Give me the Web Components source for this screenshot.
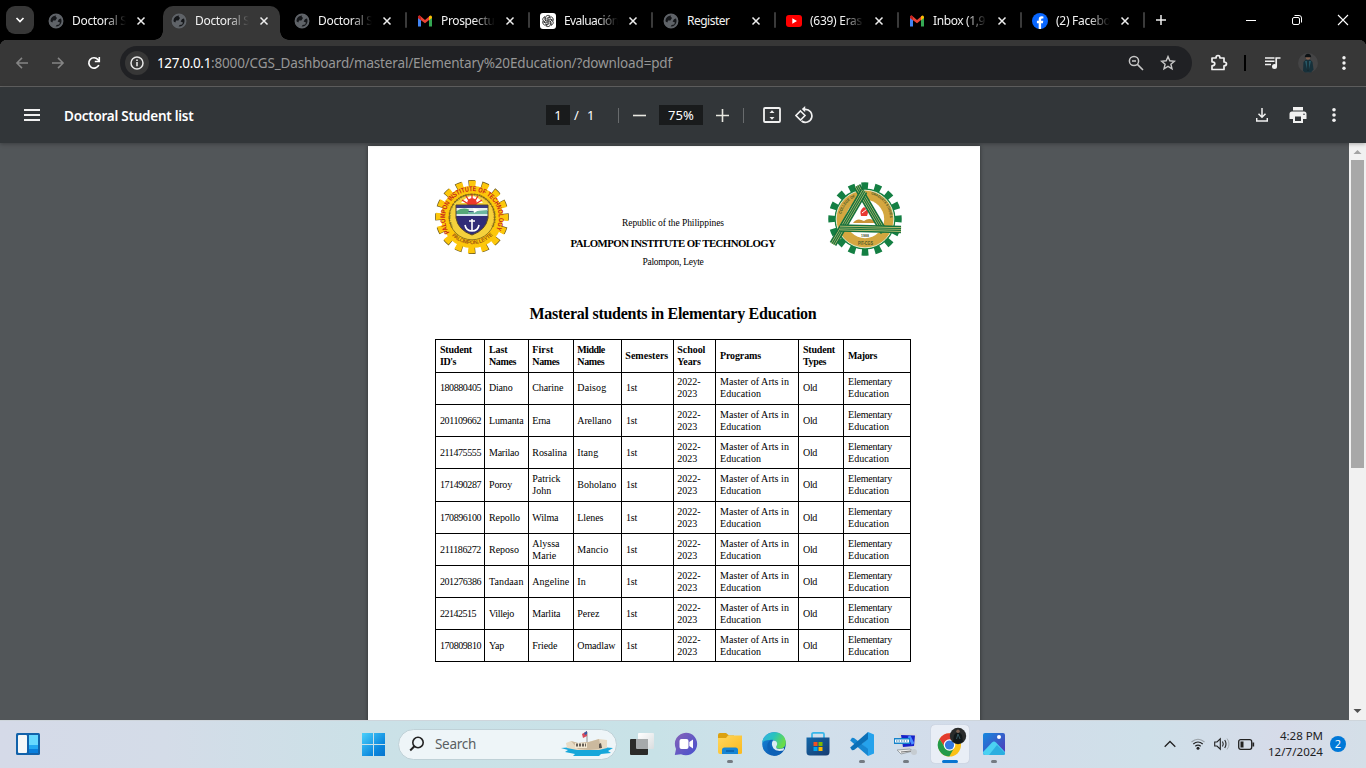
<!DOCTYPE html>
<html lang="en">
<head>
<meta charset="utf-8">
<title>Doctoral Student list</title>
<style>
html,body{margin:0;width:1366px;height:768px;overflow:hidden;background:#000}
body{font-family:"Noto Sans","Open Sans",sans-serif;display:flex;flex-direction:column}
</style>
</head>
<body>
<browser-tabs></browser-tabs>
<address-bar></address-bar>
<pdf-toolbar></pdf-toolbar>
<pdf-viewer><pdf-document></pdf-document></pdf-viewer>
<task-bar></task-bar>
<script>
function define(name, html, css, setup) {
  customElements.define(name, class extends HTMLElement {
    connectedCallback() {
      if (this.shadowRoot) return;
      const root = this.attachShadow({ mode: 'open' });
      root.innerHTML = '<style>*,:host{box-sizing:border-box}svg{display:block;flex:none}' + css + '</style>' + (typeof html === 'function' ? html(this) : html);
      if (setup) setup(this, root);
    }
  });
}

/* Text spaced to occupy the width given in its "w" attribute. */
define('fit-text', '<span><slot></slot></span>',
  ':host{display:inline-block;white-space:pre}span{display:inline-block}',
  (el, root) => {
    const w = +el.getAttribute('w');
    if (!w) return;
    const s = root.querySelector('span'), n = el.textContent.length;
    const gap = (w - s.getBoundingClientRect().width) / n;
    s.style.letterSpacing = gap.toFixed(3) + 'px';
  });

const GLYPHS = {
  globe: '<svg width="16" height="16" viewBox="0 0 16 16"><circle cx="8" cy="8" r="7.1" fill="#5f6368"/><path d="M8.6 1.6L7.6 3.6 9 5 7.4 7.6H5L4.4 9.6 2 8.2Q1.5 3 6 1.3z" fill="#15171a"/><path d="M13.8 5L11 6.3 9.6 8.5 12 9.4 11.2 11.5 8.6 12 7.5 14 10 14.6Q15.500 12 14.3 6z" fill="#15171a"/><circle cx="8" cy="8" r="6.500" fill="none" stroke="#5f6368" stroke-width="1.900"/></svg>',
  gmail: '<svg width="16" height="16" viewBox="0 0 16 16"><path d="M1 4V13.500H4V6z" fill="#4285f4"/><path d="M12 6V13.500H15V4z" fill="#34a853"/><path d="M1 4.200Q1 2.400 2.800 2.600L8 7 13 2.700V6.200L8 10.200 1 5z" fill="#ea4335"/><path d="M12 3.500L13.300 2.500Q15 2.300 15 4.300V5L12 7.200z" fill="#fbbc04"/><path d="M1 4.200Q1 2.700 2.500 2.600L4 3.500V7.200L1 5z" fill="#c5221f"/></svg>',
  gpt: '<svg width="16" height="16" viewBox="0 0 16 16"><rect width="16" height="16" rx="3" fill="#fff"/><g fill="none" stroke="#111" stroke-width=".75">' + [0, 60, 120, 180, 240, 300].map(a => '<path transform="rotate(' + a + ' 8 8)" d="M5.700 6.700V4.400Q5.900 2.300 8 2.300 9.300 2.400 10.200 3.200L7.200 5V8.100"/>').join('') + '</g></svg>',
  youtube: '<svg width="16" height="16" viewBox="0 0 16 16"><rect y="2" width="16" height="12" rx="3" fill="#f00"/><path d="M6.300 5.300L11 8 6.300 10.700z" fill="#fff"/></svg>',
  facebook: '<svg width="16" height="16" viewBox="0 0 16 16"><circle cx="8" cy="8" r="8" fill="#0866ff"/><path d="M6.700 16V10.200H4.900V7.700H6.700V6.500Q6.800 3.200 9.700 3.200L11.400 3.400V5.600H10.200Q9.100 5.600 9.100 6.700V7.700H11.300L10.900 10.200H9.100V16z" fill="#fff"/></svg>'
};

define('browser-tab', el =>
  '<div class="body">' + GLYPHS[el.getAttribute('icon')] +
  '<div class="title"><fit-text w="' + el.getAttribute('w') + '">' + el.getAttribute('label') + '</fit-text></div>' +
  '<svg class="x" width="10" height="10" viewBox="0 0 10 10"><path d="M1.500 1.500L8.500 8.500M8.500 1.500L1.500 8.500" stroke="#eee" stroke-width="1.500"/></svg></div><i></i>',
  `:host{display:flex;width:123px;height:34px;flex:none;align-items:center}
  .body{position:relative;width:117px;height:34px;padding:0 0 5px 8px;display:flex;align-items:center;border-radius:10px 10px 0 0}
  .title{width:55px;margin-left:8px;height:20px;line-height:20px;overflow:hidden;font-size:12px;color:#f2f2f2;white-space:nowrap;-webkit-mask-image:linear-gradient(90deg,#000 60%,transparent 98%);mask-image:linear-gradient(90deg,#000 60%,transparent 98%)}
  :host([plain]) .title{mask-image:none;-webkit-mask-image:none}
  .x{margin-left:9px}
  i{width:2px;height:16px;margin:-6px 0 0 2px;background:#3a3a3a;border-radius:1px}
  :host([nosep]) i{background:none}
  :host([active]) .body{background:#373737}
  :host([active]) .body::before,:host([active]) .body::after{content:"";position:absolute;bottom:0;width:9px;height:9px}
  :host([active]) .body::before{left:-9px;background:radial-gradient(circle at 0 0,transparent 8.500px,#373737 9px)}
  :host([active]) .body::after{right:-9px;background:radial-gradient(circle at 100% 0,transparent 8.500px,#373737 9px)}`);

define('browser-tabs', () =>
  '<div class="menu"><svg width="10" height="8" viewBox="0 0 10 8"><path d="M1.500 2L5 5.500 8.500 2" fill="none" stroke="#fff" stroke-width="1.700"/></svg></div>' +
  [['globe', 'Doctoral S', 54.5, 'nosep'], ['globe', 'Doctoral S', 54.5, 'active nosep'], ['globe', 'Doctoral S', 54.5, ''], ['gmail', 'Prospectu', 53.5, ''], ['gpt', 'Evaluación', 54.500, ''], ['globe', 'Register', 42.500, 'plain'], ['youtube', '(639) Eras', 52, ''], ['gmail', 'Inbox (1,9', 52, ''], ['facebook', '(2) Facebo', 54.5, '']]
    .map(t => `<browser-tab icon="${t[0]}" label="${t[1]}" w="${t[2]}" ${t[3]}></browser-tab>`).join('') +
  `<svg class="plus" width="12" height="12" viewBox="0 0 12 12"><path d="M6 1V11M1 6H11" stroke="#eee" stroke-width="1.500"/></svg>
  <div class="win"><svg width="12" height="12" viewBox="0 0 12 12"><path d="M1 6.500H11" stroke="#fff"/></svg>
  <svg width="12" height="12" viewBox="0 0 12 12"><rect x="1.500" y="3.500" width="7" height="7" rx="1.500" fill="none" stroke="#fff"/><path d="M3.500 1.500H8Q10.500 1.500 10.500 4V8.500" fill="none" stroke="#fff"/></svg>
  <svg width="12" height="12" viewBox="0 0 12 12"><path d="M1 1L11 11M11 1L1 11" stroke="#fff" stroke-width="1.100"/></svg></div>`,
  `:host{display:flex;height:40px;background:#000;padding-top:6px;flex:none}
  .menu{width:28px;height:28px;border-radius:9px;background:#373737;margin:0 6px;display:grid;place-items:center;flex:none}
  .plus{margin:8px 0 0 8px}
  .win{margin:8px 17px 0 auto;display:flex;gap:34px}`);

define('address-bar', `
  <div class="nav">
  <svg width="14" height="12" viewBox="0 0 14 12"><path d="M13 6H2M7 .9L1.900 6 7 11.100" fill="none" stroke="#858585" stroke-width="1.500"/></svg>
  <svg width="14" height="12" viewBox="0 0 14 12"><path d="M1 6H12M7 .9L12.100 6 7 11.100" fill="none" stroke="#858585" stroke-width="1.500"/></svg>
  <svg width="14" height="14" viewBox="0 0 14 14"><path d="M11.800 9A5.200 5.200 0 1 1 11 3.600L12.200 5" fill="none" stroke="#fff" stroke-width="1.700"/><path d="M12.300 1V5.500H7.800" fill="none" stroke="#fff" stroke-width="1.600"/></svg></div>
  <div class="box"><div class="info"><svg width="14" height="14" viewBox="0 0 14 14"><circle cx="7" cy="7" r="6" fill="none" stroke="#e6e6e6" stroke-width="1.500"/><path d="M7 6V10.200M7 3.600V5" stroke="#e6e6e6" stroke-width="1.600"/></svg></div>
  <div class="url"><fit-text w="54" class="host">127.0.0.1</fit-text><fit-text w="461">:8000/CGS_Dashboard/masteral/Elementary%20Education/?download=pdf</fit-text></div>
  <svg class="mag" width="16" height="16" viewBox="0 0 16 16"><circle cx="6" cy="6" r="4.600" fill="none" stroke="#c7c7c7" stroke-width="1.500"/><path d="M9.400 9.400L15 15M4 6H8" stroke="#c7c7c7" stroke-width="1.600"/></svg>
  <svg class="star" width="16" height="16" viewBox="0 0 16 16"><path d="M8 1.600L9.800 5.800 14.400 6.200 10.900 9.200 12 13.800 8 11.400 4 13.800 5.100 9.200 1.600 6.200 6.200 5.800z" fill="none" stroke="#c7c7c7" stroke-width="1.400"/></svg></div>
  <svg class="puzzle" width="18" height="18" viewBox="0 0 18 18"><path d="M2 4.500H6Q6 2 8 2 10 2 10 4.500H14V8.500Q16.500 8.500 16.500 10.300 16.500 12.300 14 12.300V16H2V12.300Q4.800 12.300 4.800 10.300 4.800 8.300 2 8.300z" transform="translate(0,-.5)" fill="none" stroke="#f1f1f1" stroke-width="1.700" stroke-linejoin="round"/></svg>
  <i></i>
  <svg class="music" width="16" height="14" viewBox="0 0 16 14"><path d="M0 2H9.500M0 5.200H9.500M0 8.400H6" stroke="#f1f1f1" stroke-width="1.500"/><circle cx="9.500" cy="10.500" r="2.500" fill="#f1f1f1"/><path d="M11.200 10.500V2H15.500" fill="none" stroke="#f1f1f1" stroke-width="1.700"/></svg>
  <svg class="avatar" width="20" height="20" viewBox="0 0 20 20"><circle cx="10" cy="10" r="10" fill="#444445"/><path d="M5 18L5.500 9 8 6.500H12L14.500 9 15.500 16.500 13 19.500H7z" fill="#17303a"/><path d="M7 8L9.500 18H10.500L13 8" fill="#285765"/><circle cx="10" cy="4.500" r="2.300" fill="#80604f"/><path d="M6.800 4.200Q7 .7 10 .7 13 .7 13.200 4.200z" fill="#0c1114"/><path d="M10 8V18" stroke="#080b0d"/></svg>
  <svg class="dots" width="4" height="14" viewBox="0 0 4 14"><g fill="#f1f1f1"><circle cx="2" cy="1.800" r="1.700"/><circle cx="2" cy="7" r="1.700"/><circle cx="2" cy="12.200" r="1.700"/></g></svg>`,
  `:host{display:flex;height:47px;background:linear-gradient(#373737,#373737) 0 7px no-repeat,radial-gradient(circle at 7px 7px,#373737 7px,#000 7.500px) 0 0/7px 7px no-repeat,radial-gradient(circle at 0 7px,#373737 7px,#000 7.500px) 100% 0/7px 7px no-repeat,#373737;border-bottom:1px solid #646464;align-items:center;flex:none}
  .nav{display:flex;gap:22px;align-items:center;margin-left:15px;width:105px}
  .box{width:1072px;height:34px;border-radius:17px;background:#202124;display:flex;align-items:center;padding-left:5px;flex:none}
  .info{width:24px;height:24px;border-radius:50%;background:#373737;display:grid;place-items:center;flex:none}
  .url{font-size:13.500px;color:#979797;margin-left:8px;white-space:nowrap;line-height:20px;width:971px}
  .host{color:#fff}.star{margin-left:16px}.puzzle{margin-left:18px}
  i{width:2px;height:16px;background:#000;margin-left:16px;flex:none}
  .music{margin-left:19px}.avatar{margin-left:17px}.dots{margin-left:24px}`);

define('pdf-toolbar', `
  <div class="left"><svg width="16" height="12" viewBox="0 0 16 12"><path d="M0 1H16M0 6H16M0 11H16" stroke="#f1f1f1" stroke-width="2"/></svg><fit-text w="129.500">Doctoral Student list</fit-text></div>
  <div class="mid"><b class="pg">1</b><span class="of"><fit-text w="21">/  1</fit-text></span><i></i>
  <svg class="minus" width="13" height="13" viewBox="0 0 13 13"><path d="M0 6.500H13" stroke="#e8e8e0" stroke-width="1.600"/></svg><b class="zoom"><fit-text w="26">75%</fit-text></b>
  <svg width="13" height="13" viewBox="0 0 13 13"><path d="M0 6.500H13M6.500 0V13" stroke="#e8e8e0" stroke-width="1.600"/></svg><i class="two"></i>
  <svg class="fitp" width="18" height="16" viewBox="0 0 18 16"><rect x="1" y="1" width="16" height="14" rx="1" fill="none" stroke="#f1f1f1" stroke-width="1.800"/><path d="M9 3.200L11.500 6H6.500zM9 12.800L11.500 10H6.500z" fill="#f1f1f1"/></svg>
  <svg class="rot" width="18" height="18" viewBox="0 0 18 18"><path d="M8 3.300H10A6.500 6.500 0 1 1 6.500 15" fill="none" stroke="#f1f1f1" stroke-width="1.700"/><path d="M10.200 0V6.200L6.800 3.100z" fill="#f1f1f1"/><path d="M5.500 5L10 9.500 5.500 14 1 9.500z" fill="none" stroke="#f1f1f1" stroke-width="1.600"/></svg></div>
  <div class="right">
  <svg width="12" height="14" viewBox="0 0 12 14"><path d="M6 0V9M2.500 5.800L6 9.300 9.500 5.800M.7 10V13H11.300V10" fill="none" stroke="#f1f1f1" stroke-width="1.500"/></svg>
  <svg width="18" height="16" viewBox="0 0 18 16"><path d="M4 0H14V3.500H4zM3 4.500H15Q17.500 4.500 17.500 7V12H14V16H4V12H.5V7Q.5 4.500 3 4.500z" fill="#f1f1f1"/><path d="M6 9.500H12V14H6z" fill="#323639"/><circle cx="15" cy="7.200" r=".8" fill="#323639"/></svg>
  <svg width="4" height="14" viewBox="0 0 4 14"><g fill="#f1f1f1"><circle cx="2" cy="1.800" r="1.800"/><circle cx="2" cy="7" r="1.800"/><circle cx="2" cy="12.200" r="1.800"/></g></svg></div>`,
  `:host{display:flex;height:56px;background:#323639;align-items:center;flex:none;position:relative;z-index:1;box-shadow:0 1px 4px rgba(0,0,0,.3);color:#fff}
  .left{display:flex;align-items:center;gap:24px;padding-left:24px;width:546px;font-weight:600;font-size:13.500px;line-height:20px}
  .left fit-text{margin-top:2px}
  .mid{display:flex;align-items:center;width:267px;font-size:13px}
  b{font-weight:400;background:#191b1c;height:20px;line-height:20px;text-align:center}
  .pg{width:24px}.of{width:24px;margin-left:4px;white-space:pre}i{width:1px;height:15px;background:#686b6d;margin:0 14px 0 20px}
  .minus{margin-right:13px}.zoom{width:44px;margin-right:13px}i.two{margin:0 19px 0 14px}.rot{margin-left:14px}
  .right{display:flex;align-items:center;margin-left:auto;padding-right:30px}.right svg+svg{margin-left:21px}.right svg:last-child{margin-left:25px}`);

define('pdf-viewer', `<main><slot></slot></main><aside>
  <svg width="17" height="17" viewBox="0 0 17 17"><path d="M4.500 11L8.500 7 12.500 11z" fill="#a3a3a3"/></svg><div></div>
  <svg width="17" height="17" viewBox="0 0 17 17"><path d="M4.500 6L8.500 10 12.500 6z" fill="#505050"/></svg></aside>`,
  `:host{display:flex;height:577px;background:#525659;flex:none}
  main{width:1349px;height:577px;overflow:hidden;padding:3px 0 0 368px}
  aside{width:17px;background:#f1f1f1;display:flex;flex-direction:column}
  aside div{height:308px;width:13px;margin:0 2px auto;background:#a8a8a8}`);

function ring(cx, cy, r, teeth, width, color, turn) {
  const seg = 2 * Math.PI * r / teeth;
  return `<circle cx="${cx}" cy="${cy}" r="${r}" fill="none" stroke="${color}" stroke-width="${width}" stroke-dasharray="${seg * .5} ${seg * .5}" transform="rotate(${turn} ${cx} ${cy})"/>`;
}

define('institute-seal', `<svg width="74" height="74" viewBox="0 0 74 74">
  <defs><path id="top" d="M14.500 52.500A26.800 26.800 0 1 1 59.500 52.500"/><path id="low" d="M13 51A28.500 28.500 0 0 0 61 51"/><path id="in" d="M18 47A21.500 21.500 0 1 1 56 47"/></defs>` +
  ring(37, 37, 33, 16, 7.800, '#6d5a20', -96) + ring(37, 37, 32.800, 16, 6.800, '#fdc70b', -95) + `
  <circle cx="37" cy="37" r="31" fill="#fdc70b"/><circle cx="37" cy="37" r="22.800" fill="#f5d13c" stroke="#77621c" stroke-width=".8"/>
  <path d="M26 23Q37 9 48 23z" fill="#fff"/><g stroke="#e92c22" stroke-width="1.300"><path d="M37 14V23M31 16L36 24M43 16L38 24M27 20L35 25M47 20L39 25"/></g><circle cx="37" cy="23" r="4.800" fill="#ee3829"/>
  <path d="M21 25H53V38Q51 50 37 55 23 50 21 38z" fill="#302c78" stroke="#5c4a25"/>
  <path d="M21.500 25.500H52.500V28H21.500z" fill="#3c3a85"/><path d="M21.500 28H52.500V31H21.500z" fill="#e8f1ef"/><path d="M21.500 31Q28 27 34 29.500L33 34H21.500z" fill="#55a878"/><path d="M33 32L52.500 30V34H33z" fill="#6db6a0"/><path d="M21.500 34H52.500V36H21.500z" fill="#d7e7eb"/><path d="M38 28L44 30 39 33z" fill="#fff"/>
  <path d="M37 39V51M34 41H40M30 45Q31 51 37 51 43 51 44 45" fill="none" stroke="#fff" stroke-width="1.600"/>
  <g font-family="Liberation Sans" font-weight="bold"><text font-size="7" fill="#c6231b"><textPath href="#top" textLength="111" lengthAdjust="spacingAndGlyphs">PALOMPON INSTITUTE OF TECHNOLOGY</textPath></text>
  <text font-size="5.500" fill="#a45c12"><textPath href="#low" startOffset="6" textLength="46">PALOMPON, LEYTE</textPath></text>
  <text font-size="3" fill="#63501a"><textPath href="#in" textLength="90">INSTRUCTION RESEARCH EXTENSION PRODUCTION</textPath></text></g></svg>`,
  ':host{display:block;width:74px;height:74px}');

const BANDS = ['M30 7L57 53', 'M37 12L6 65', 'M13 49L74 50.500'];
define('college-seal', `<svg width="76" height="78" viewBox="0 0 76 78">
  <defs><path id="a" d="M14 36A25 25 0 0 1 31 17"/><path id="b" d="M43 15A26 26 0 0 1 63 42"/></defs>` +
  ring(38, 40, 33, 16, 7.500, '#147f43', -96) + `
  <circle cx="38" cy="40" r="30.500" fill="#147f43"/><circle cx="38" cy="40" r="28.800" fill="#d4a740" stroke="#edeacb"/><circle cx="38" cy="40" r="19.200" fill="#fff"/>
  <path d="M37 20L54 49H20z" fill="#fff"/>
  <path d="M26 44Q30 38 37 42 43 37 50 44z" fill="#c99437"/><path d="M34 37Q32 31 37 28 43 31 40 37z" fill="#e93932"/><path d="M35 34L40 30" stroke="#fff"/>
  <g fill="none">` + BANDS.map(d => `<path d="${d}" stroke="#17713c" stroke-width="7.500"/><path d="${d}" stroke="#d9cf7c" stroke-width="4.400"/><path d="${d}" stroke="#17713c" stroke-width="3.200"/><path d="${d}" stroke="#d9cf7c" stroke-width=".6"/>`).join('') + `</g>
  <g font-family="Liberation Sans" font-weight="bold" fill="#46582a"><text font-size="4"><textPath href="#a" startOffset="1" textLength="23" lengthAdjust="spacingAndGlyphs">COLLEGE OF</textPath></text><text font-size="3.600"><textPath href="#b" startOffset="1" textLength="32" lengthAdjust="spacingAndGlyphs">GRADUATE STUDIES</textPath></text><text x="34" y="58" font-size="3.500" textLength="8">1988</text><text x="31" y="66" font-size="4.500" textLength="15" lengthAdjust="spacingAndGlyphs">PIT-CGS</text></g></svg>`,
  ':host{display:block;width:76px;height:78px}');

const STUDENTS = [
  ['180880405', 'Diano', 'Charine', 'Daisog'], ['201109662', 'Lumanta', 'Erna', 'Arellano'], ['211475555', 'Marilao', 'Rosalina', 'Itang'],
  ['171490287', 'Poroy', 'Patrick<br>John', 'Boholano'], ['170896100', 'Repollo', 'Wilma', 'Llenes'], ['211186272', 'Reposo', 'Alyssa<br>Marie', 'Mancio'],
  ['201276386', 'Tandaan', 'Angeline', 'In'], ['22142515', 'Villejo', 'Marlita', 'Perez'], ['170809810', 'Yap', 'Friede', 'Omadlaw']
];
const WIDTHS = { Diano: 23.5, Charine: 31, Daisog: 29, Lumanta: 34.5, Erna: 18, Arellano: 34, Marilao: 30, Rosalina: 34.5, Itang: 21, Poroy: 23, Boholano: 39, Repollo: 31, Wilma: 26, Llenes: 26, Reposo: 30, Mancio: 31, Tandaan: 34.5, Angeline: 37, Villejo: 25, Marlita: 28, Perez: 22, Yap: 15, Friede: 25, Omadlaw: 38, '22142515': 36 };

define('student-table', () => {
  const ft = (t, w) => w ? `<fit-text w="${w}">${t}</fit-text>` : t;
  const heads = [[['Student', 32], ["ID's", 16]], [['Last', 18.5], ['Names', 27]], [['First', 21], ['Names', 27]], [['Middle', 27.5], ['Names', 27]], [['Semesters', 43]], [['School', 28], ['Years', 23.5]], [['Programs', 41]], [['Student', 32], ['Types', 23]], [['Majors', 29]]];
  return '<table><colgroup>' + [49, 44, 45, 48, 52, 42, 83, 45, 67].map(w => `<col style="width:${w}px">`).join('') + '</colgroup><tr>' +
    heads.map(h => '<th>' + h.map(p => ft(p[0], p[1])).join('<br>') + '</th>').join('') + '</tr>' +
    STUDENTS.map(s => '<tr>' + s.map((t, i) => '<td>' + (t.includes('<') ? t : ft(t, WIDTHS[t] || (i === 0 ? 41 : 0))) + '</td>').join('') +
      '<td>' + ft('1st', 11) + '</td><td>2022-<br>2023</td><td>' + ft('Master of Arts in', 69) + '<br>' + ft('Education', 41) + '</td><td>' + ft('Old', 14) + '</td><td>' + ft('Elementary', 44) + '<br>' + ft('Education', 41) + '</td></tr>').join('') + '</table>';
}, `:host{display:block;width:476px}
  table{border-collapse:collapse;table-layout:fixed;width:476px;font-size:10px;line-height:12px;text-align:left;color:#000}
  th,td{border:1px solid #000;padding:1px 0 0 4px;height:32px;vertical-align:middle;white-space:nowrap}th{height:33px;padding-top:0}
  tr:nth-child(2) td{padding-top:0;padding-bottom:1px}tr:nth-child(5) td{height:33px;padding-top:0}
  th:nth-child(3),th:nth-child(4),th:nth-child(5),th:nth-child(6),td:nth-child(3),td:nth-child(4),td:nth-child(6){padding-left:3.300px}
  fit-text{vertical-align:top}`);

define('pdf-document', `
  <header><institute-seal></institute-seal><div><p><fit-text w="102">Republic of the Philippines</fit-text></p><p class="b"><fit-text w="205">PALOMPON INSTITUTE OF TECHNOLOGY</fit-text></p><p><fit-text w="61">Palompon, Leyte</fit-text></p></div><college-seal></college-seal></header>
  <h1><fit-text w="287">Masteral students in Elementary Education</fit-text></h1><student-table></student-table>`,
  `:host{display:block;width:612px;height:700px;background:#fff;padding:34px 67px 0;font-family:"Liberation Serif","Times New Roman",serif;box-shadow:0 0 4px rgba(0,0,0,.45)}
  header{display:flex;height:96px}
  header div{width:328px;padding-top:34px;text-align:center}
  p{margin:0;font-size:9.500px;line-height:19.500px;height:19.500px}.b{font-size:10.800px;font-weight:700}
  college-seal{margin:-1px -10px 0 -10px}
  h1{margin:25.500px 2px 14.500px 0;height:23px;line-height:23px;font-size:16px;text-align:center}`);

const PERSON = '<circle cx="20" cy="4" r="8.200" fill="#292b2b"/><path d="M15 10L16 3 18 1H22L24 3 25 10 20 12z" fill="#111719"/><circle cx="20" cy="-.8" r="1.700" fill="#7b6153"/><path d="M20 2L18.500 7M20 2L22 7" stroke="#36565f"/>';
const APPS = {
  task: '<defs><linearGradient id="w" x2="1" y2="1"><stop stop-color="#fff"/><stop offset="1" stop-color="#d9dddf"/></linearGradient></defs><rect x="8" y="1" width="16" height="16" rx="1" fill="url(#w)"/><rect y="7" width="18" height="16" rx="1" fill="#2b2b29"/><path d="M6 7H18V17H7Q6 17 6 16z" fill="#a6aaab"/>',
  chat: '<defs><linearGradient id="c" x2="1" y2="1"><stop stop-color="#8764b8"/><stop offset="1" stop-color="#4650ce"/></linearGradient></defs><path d="M12 .7A11.300 11.300 0 1 1 7 22.200L.8 23 2 17A11.300 11.300 0 0 1 12 .7z" fill="url(#c)"/><rect x="5.500" y="7" width="9" height="10" rx="2" fill="#fff"/><path d="M15.300 10L19 7.500V16.500L15.300 14z" fill="#fff"/>',
  folder: '<defs><linearGradient id="f" x2="1" y2="1"><stop stop-color="#ffd75e"/><stop offset="1" stop-color="#fab91d"/></linearGradient></defs><path d="M0 3Q0 1 2 1H8L11 3.500H16V8H0z" fill="#dca110"/><path d="M0 6H8L10 3.500H24V21Q24 22 22 22H2Q0 22 0 20z" fill="url(#f)"/><path d="M4 22V18Q4 15.500 6.500 15.500H17.500Q20 15.500 20 18V22z" fill="#1686d4"/><path d="M8 19H16" stroke="#0a5ea9" stroke-width="1.500"/>',
  edge: '<defs><linearGradient id="e" x1="0" y1="0" x2="1" y2=".4"><stop stop-color="#35aee9"/><stop offset=".5" stop-color="#29c3bd"/><stop offset="1" stop-color="#68dc4a"/></linearGradient><linearGradient id="e2" x2="1" y2="1"><stop stop-color="#1688db"/><stop offset="1" stop-color="#0a4aa2"/></linearGradient></defs><circle cx="12" cy="12" r="11.800" fill="url(#e2)"/><path d="M.3 11C1-3 23-3 23.800 10 24 15.500 20 17.500 16 16.500 14 16 13.600 15.200 14.400 14 16.500 10 12 7 8 8 4 8 1 9 .3 11z" fill="url(#e)"/><path d="M10.800 8Q6 10 8.500 15.500 12 22 21.500 18.500 18 24 12 23.800 4 20 5.500 12 7 8 10.800 8z" fill="#0d61b6"/><path d="M11 8.500Q16 8.500 15 13 13.500 15 14.500 16.300 17 18 22 16L21.600 18.500Q14 20 11.500 16.500 8.500 12 11 8.500z" fill="#dcecf3"/>',
  store: '<defs><linearGradient id="s" x2="1" y2="1"><stop stop-color="#1267a9"/><stop offset="1" stop-color="#183c70"/></linearGradient></defs><path d="M6 7V2Q6 .8 7.500.8H16.500Q18 .8 18 2V7" fill="none" stroke="#36b6e9" stroke-width="1.700"/><path d="M.5 5.500H23.500V20Q23.500 23.500 20 23.500H4Q.5 23.500.5 20z" fill="url(#s)"/><path d="M7.500 10H11.500V14H7.500z" fill="#f25022"/><path d="M12.500 10H16.500V14H12.500z" fill="#7fba00"/><path d="M7.500 15H11.500V19H7.500z" fill="#00a4ef"/><path d="M12.500 15H16.500V19H12.500z" fill="#ffb900"/>',
  code: '<path d="M18 0L24 2.500V21.500L18 24V17.500L11.500 12 18 6.700z" fill="#25a2ec"/><path d="M18 24L.2 8.500 2 5.800 4 6 18 16.800z" fill="#1687d2"/><path d="M18 0L.2 15.500 2 18.200 4 18 18 7.200z" fill="#0b70b8"/>',
  pc: '<path d="M4 1L23 2 22 16 8 18z" fill="#d6dadd"/><path d="M7 3L21 3.500 20 14 9 15z" fill="#1924c9"/><path d="M15 4L19 12" stroke="#4b8dff" stroke-width="3"/><path d="M0 6H16V12H0z" fill="#1684cb"/><path d="M1 7.500H15V10.500H1z" fill="#fff"/><path d="M2 9H14" stroke="#2477ac" stroke-width="1.200" stroke-dasharray="1.500 1"/><path d="M3 18L16 17 19 19 7 22z" fill="#eee" stroke="#9aa2a7"/><circle cx="20" cy="20" r="3" fill="#c6ccd1"/><path d="M7 20L17 19" stroke="#777"/>',
  chrome: '<g transform="translate(-.5 1)"><circle cx="12" cy="12" r="11.500" fill="#fbc116"/><path d="M2 6A11.500 11.500 0 0 1 22 6L17 9H12Q9 9 7.500 14.500z" fill="#e33b2e"/><path d="M2 6A11.500 11.500 0 0 0 11.800 23.500L16.800 14.500Q13 20 7.500 14.500z" fill="#249b48"/><circle cx="12" cy="12" r="5.800" fill="#fff"/><circle cx="12" cy="12" r="4.600" fill="#3478df"/></g>' + PERSON,
  photos: '<defs><linearGradient id="p" x2="1" y2="1"><stop stop-color="#1589df"/><stop offset="1" stop-color="#5636b6"/></linearGradient></defs><rect x="1" y="1" width="22" height="22" rx="2" fill="url(#p)"/><path d="M1 20L10 10.500Q12 8.500 14 10.500L23 20V21Q23 23 21 23H3Q1 23 1 21z" fill="#4bd1f2"/><path d="M7 23L15 13 23 21Q23 23 21 23z" fill="#2baee0"/><circle cx="17" cy="5" r="2" fill="#fff"/>'
};

define('task-icon', el => `<svg width="24" height="24" viewBox="0 0 24 24" overflow="visible">${APPS[el.getAttribute('app')]}</svg><i></i>`,
  `:host{display:flex;flex-direction:column;align-items:center;width:38px;height:38px;padding-top:7px;border-radius:4px;flex:none}
  svg{overflow:visible}i{height:3px;width:6px;border-radius:2px;margin-top:4px;flex:none}
  :host([open]) i{background:#747b82}
  :host([current]){background:#e9eef6;box-shadow:0 0 1px #aab}:host([current]) i{width:16px;background:#0875d1}`);

define('task-bar', `
  <svg class="widgets" width="24" height="22" viewBox="0 0 24 22"><rect width="24" height="22" rx="1.500" fill="#1262aa"/><rect x="2" y="2" width="9" height="18" rx="1" fill="#f7f8f8"/><path d="M13 2H22V12H13z" fill="#66d8ff"/><path d="M13 12H22V16H13z" fill="#23a8f2"/><path d="M13 16H22V20H13z" fill="#087edd"/></svg>
  <svg class="start" width="23" height="23" viewBox="0 0 23 23"><defs><linearGradient id="g" gradientUnits="userSpaceOnUse" x2="23" y2="23"><stop stop-color="#4cd0fb"/><stop offset=".7" stop-color="#0986dd"/><stop offset="1" stop-color="#0874cd"/></linearGradient></defs><path d="M0 0H11V11H0zM12 0H23V11H12zM0 12H11V23H0zM12 12H23V23H12z" fill="url(#g)"/></svg>
  <div class="search"><svg width="16" height="16" viewBox="0 0 16 16"><circle cx="9" cy="6.500" r="5.200" fill="none" stroke="#222" stroke-width="1.600"/><path d="M5.400 10.300L1.200 14.500" stroke="#222" stroke-width="2"/></svg><fit-text w="41">Search</fit-text>
  <svg class="ship" width="52" height="26" viewBox="0 0 52 26"><path d="M0 17Q26 14 52 17L47 20 50 22 40 23 38 25H12L14 23 4 21 7 19z" fill="#18a7da"/><path d="M5 12L10 10 17 12 27 11 38 8 46 9 46 17 38 19H16L6 17z" fill="#e7dbc5"/><path d="M10 10L17 12 28 11 38 8 40 18 28 19 17 18z" fill="#cbb99e"/><path d="M14 12H26V17H14z" fill="#f2e8d3"/><path d="M15 14H25" stroke="#655e57" stroke-width="3" stroke-dasharray="2 1"/><path d="M38 17V13L40 12 41 17z" fill="#5d544c"/><path d="M26 11V1" stroke="#777" stroke-width=".8"/><path d="M21 3L26 0V5L22 7z" fill="#da4b5c"/><path d="M23 2L26 0V3L24 4z" fill="#345da8"/></svg></div>
  <div class="apps"><task-icon app="task"></task-icon><task-icon app="chat"></task-icon><task-icon app="folder" open></task-icon><task-icon app="edge"></task-icon><task-icon app="store"></task-icon><task-icon app="code" open></task-icon><task-icon app="pc" open></task-icon><task-icon app="chrome" current></task-icon><task-icon app="photos" open></task-icon></div>
  <div class="tray"><svg width="12" height="8" viewBox="0 0 12 8"><path d="M.7 6.800L6 1.500 11.300 6.800" fill="none" stroke="#222" stroke-width="1.300"/></svg>
  <svg style="margin-left:15px" width="14" height="12" viewBox="0 0 14 12"><g fill="none" stroke-width="1.200"><path d="M.5 4Q7-1.500 13.500 4" stroke="#9aa1a7"/><path d="M2.300 6Q7 2 11.700 6M4.300 8.200Q7 6 9.700 8.200" stroke="#222"/></g><circle cx="7" cy="10.300" r="1.500" fill="#222"/></svg>
  <svg style="margin-left:9px" width="16" height="14" viewBox="0 0 16 14"><path d="M.7 5H3L6.300 1.800V12.200L3 9H.7zM8.500 4.500Q10 7 8.500 9.500M10.700 3Q13.300 7 10.700 11" fill="none" stroke="#222" stroke-width="1.100"/><path d="M13 1.500Q17 7 13 12.500" fill="none" stroke="#a6adb2"/></svg>
  <svg style="margin-left:8px" width="17" height="11" viewBox="0 0 17 11"><rect x=".7" y=".7" width="13" height="9.600" rx="2" fill="none" stroke="#222" stroke-width="1.300"/><path d="M2.500 2.500H5.500V8.500H2.500z" fill="#222"/><path d="M15.300 3.500V7.500" stroke="#222" stroke-width="1.700"/></svg>
  <div class="time"><fit-text w="43">4:28 PM</fit-text><fit-text w="55">12/7/2024</fit-text></div><div class="badge">2</div></div>`,
  `:host{display:flex;height:48px;flex:none;align-items:center;padding-bottom:1px;color:#202124;background:linear-gradient(90deg,#d5dae8 0,#d4dce8 12%,#cbe1e7 27%,#c8e2e7 48%,#d1dfeb 60%,#d3dcea 72%,#cfe0e9 84%,#d6dbe9 94%,#d4dfe8 100%);border-top:1px solid #ced5db}
  .widgets{margin-left:16px}.start{margin-left:322px}
  .search{width:219px;height:31px;margin-left:13px;border-radius:16px;background:#eef5f8;border:1px solid #bfd1d7;display:flex;align-items:center;padding-left:10px;font-size:13.500px;color:#5a5f62;flex:none}
  .search fit-text{margin-left:10px}.ship{margin-left:85px}
  .apps{display:flex;gap:6px;margin-left:6px}
  .tray{display:flex;align-items:center;margin-left:auto;padding-right:20px}
  .time{display:flex;flex-direction:column;align-items:flex-end;width:68px;font-size:11.500px;line-height:16px}
  .badge{width:16px;height:16px;border-radius:50%;background:#0078d7;color:#fff;font-size:11px;line-height:16px;text-align:center;margin-left:7px}`);
</script>
</body>
</html>
